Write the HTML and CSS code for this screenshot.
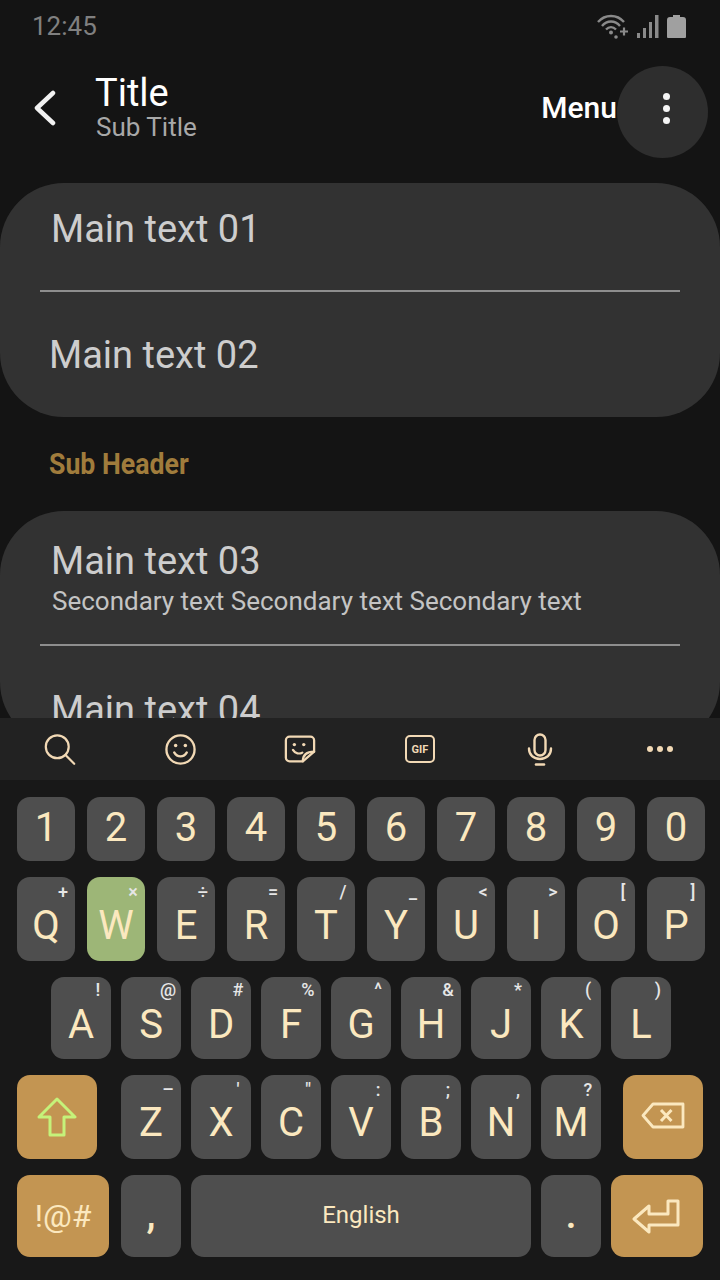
FILE: index.html
```html
<!DOCTYPE html>
<html lang="en">
<head>
    <meta charset="UTF-8">
    <meta name="viewport" content="width=device-width, initial-scale=1.0">
    <title>Settings list</title>
    <link rel="stylesheet" href="styles.css">
</head>
<body>
    <div class="phone">
        <div class="status-bar">
            <span class="clock">12:45</span>
            <div class="status-icons">
                <svg width="32" height="25" viewBox="0 0 32 25" fill="none" stroke="#8a8a8a" stroke-width="2.400">
                    <path d="M1 8C8 0 20 0 27 8"/>
                    <path d="M5 12C10 6 18 6 23 12"/>
                    <path d="M9 15.500C12 12.500 16 12.500 19 15.500"/>
                    <circle cx="14" cy="18.500" r="2" fill="#8a8a8a" stroke="none"/>
                    <circle cx="19" cy="23" r="1.800" fill="#8a8a8a" stroke="none"/>
                    <path d="M23 17.500h8M27 13.500v8" stroke-width="2.200"/>
                </svg>
                <svg width="22" height="23" viewBox="0 0 22 23" fill="#8a8a8a">
                    <rect x="0" y="18" width="3" height="5"/>
                    <rect x="6" y="13" width="3" height="10"/>
                    <rect x="12" y="7" width="3" height="16"/>
                    <rect x="18" y="0" width="3.500" height="23"/>
                </svg>
                <svg width="19" height="23" viewBox="0 0 19 23" fill="#a0a0a0">
                    <path d="M6 0h7v2h3a3 3 0 0 1 3 3v17a1 1 0 0 1-1 1H1a1 1 0 0 1-1-1V5a3 3 0 0 1 3-3h3z"/>
                </svg>
            </div>
        </div>

        <header class="app-bar">
            <svg class="back" width="26" height="36" viewBox="0 0 26 36" fill="none" stroke="#f2f2f2" stroke-width="4.500" stroke-linecap="round" stroke-linejoin="round">
                <path d="M22 3L6 18l16 15"/>
            </svg>
            <div class="titles">
                <div class="title">Title</div>
                <div class="subtitle">Sub Title</div>
            </div>
            <span class="menu-label">Menu</span>
            <div class="more-btn">
                <i></i><i></i><i></i>
            </div>
        </header>

        <main class="content">
            <section class="card card-first">
                <div class="row row-one">Main text 01</div>
                <div class="divider"></div>
                <div class="row row-two">Main text 02</div>
            </section>

            <h3 class="sub-header"><span>Sub Header</span></h3>

            <section class="card">
                <div class="row row-three">
                    Main text 03
                    <div class="secondary">Secondary text Secondary text Secondary text</div>
                </div>
                <div class="divider"></div>
                <div class="row row-four">Main text 04</div>
            </section>
        </main>

        <div class="keyboard">
            <div class="toolbar">
                <svg width="34" height="33" viewBox="0 0 36 36" fill="none" stroke="#f2d9b5" stroke-width="2.400" stroke-linecap="round">
                    <circle cx="15" cy="15" r="12.500"/>
                    <path d="M24 24l9.500 9.500"/>
                </svg>
                <svg width="33" height="33" viewBox="0 0 34 34" fill="none" stroke="#f2d9b5" stroke-width="2.400" stroke-linecap="round">
                    <circle cx="17" cy="17" r="14.500"/>
                    <path d="M10.500 20c3 5.500 10 5.500 13 0"/>
                    <circle cx="12" cy="13" r="1.800" fill="#f2d9b5" stroke="none"/>
                    <circle cx="22" cy="13" r="1.800" fill="#f2d9b5" stroke="none"/>
                </svg>
                <svg width="32" height="30" viewBox="0 0 34 34" preserveAspectRatio="none" fill="none" stroke="#f2d9b5" stroke-width="2.400" stroke-linecap="round" stroke-linejoin="round">
                    <path d="M20 31H6a4 4 0 0 1-4-4V7a4 4 0 0 1 4-4h22a4 4 0 0 1 4 4v13z"/>
                    <path d="M20 31c0-7 4-11 12-11"/>
                    <path d="M9.500 18c2.500 4.500 7 5 10 3"/>
                    <circle cx="11" cy="12" r="1.800" fill="#f2d9b5" stroke="none"/>
                    <circle cx="21" cy="12" r="1.800" fill="#f2d9b5" stroke="none"/>
                </svg>
                <div class="gif-icon">GIF</div>
                <svg width="26" height="35" viewBox="0 0 26 34" fill="none" stroke="#f2d9b5" stroke-width="2.400" stroke-linecap="round">
                    <rect x="7.500" y="2" width="11" height="21" rx="5.500"/>
                    <path d="M2 16c0 6.500 4.500 10.500 11 10.500S24 22.500 24 16"/>
                    <path d="M9 32h8" stroke-width="2.600"/>
                </svg>
                <div class="dots"><i></i><i></i><i></i></div>
            </div>

            <div class="keys">
                <div class="key-row row-digits">
                    <div class="key">1</div><div class="key">2</div><div class="key">3</div><div class="key">4</div><div class="key">5</div>
                    <div class="key">6</div><div class="key">7</div><div class="key">8</div><div class="key">9</div><div class="key">0</div>
                </div>

                <div class="key-row row-q">
                    <div class="key">Q<span class="hint">+</span></div>
                    <div class="key key-active">W<span class="hint">×</span></div>
                    <div class="key">E<span class="hint">÷</span></div>
                    <div class="key">R<span class="hint">=</span></div>
                    <div class="key">T<span class="hint">/</span></div>
                    <div class="key">Y<span class="hint">_</span></div>
                    <div class="key">U<span class="hint">&lt;</span></div>
                    <div class="key">I<span class="hint">&gt;</span></div>
                    <div class="key">O<span class="hint">[</span></div>
                    <div class="key">P<span class="hint">]</span></div>
                </div>

                <div class="key-row row-a">
                    <div class="key">A<span class="hint">!</span></div>
                    <div class="key">S<span class="hint">@</span></div>
                    <div class="key">D<span class="hint">#</span></div>
                    <div class="key">F<span class="hint">%</span></div>
                    <div class="key">G<span class="hint">^</span></div>
                    <div class="key">H<span class="hint">&amp;</span></div>
                    <div class="key">J<span class="hint">*</span></div>
                    <div class="key">K<span class="hint">(</span></div>
                    <div class="key">L<span class="hint">)</span></div>
                </div>

                <div class="key-row row-z">
                    <div class="key key-fn key-shift">
                        <svg width="40" height="40" viewBox="0 0 40 40" fill="none" stroke="#c5f27a" stroke-width="3" stroke-linejoin="round">
                            <path d="M20 2L38 20H27V38H13V20H2z"/>
                        </svg>
                    </div>
                    <div class="key">Z<span class="hint">–</span></div>
                    <div class="key">X<span class="hint">'</span></div>
                    <div class="key">C<span class="hint">"</span></div>
                    <div class="key">V<span class="hint">:</span></div>
                    <div class="key">B<span class="hint">;</span></div>
                    <div class="key">N<span class="hint">,</span></div>
                    <div class="key">M<span class="hint">?</span></div>
                    <div class="key key-fn key-del">
                        <svg width="44" height="27" viewBox="0 0 44 27" fill="none" stroke="#fbe8bf" stroke-width="2.800" stroke-linejoin="round">
                            <path d="M12 2H42V25H12L2 13.500z"/>
                            <path d="M20 8l10.500 11M30.500 8L20 19" stroke-width="3"/>
                        </svg>
                    </div>
                </div>

                <div class="key-row row-bottom">
                    <div class="key key-fn key-sym">!@#</div>
                    <div class="key key-punct">,</div>
                    <div class="key key-space">English</div>
                    <div class="key key-punct">.</div>
                    <div class="key key-fn key-enter">
                        <svg width="48" height="35" viewBox="0 0 48 35" fill="none" stroke="#fbe8bf" stroke-width="3" stroke-linejoin="round">
                            <path d="M36 2H46V26H17V33L2 20 17 7V15H36z"/>
                        </svg>
                    </div>
                </div>
            </div>
        </div>
    </div>
</body>
</html>
```

FILE: styles.css
```css
body {
    margin: 0;
    background-color: #141414;
    font-family: 'Roboto', sans-serif;
}
.phone {
    width: 720px;
    height: 1280px;
    display: flex;
    flex-direction: column;
    overflow: hidden;
}

/* status bar */
.status-bar {
    height: 52px;
    display: flex;
    justify-content: space-between;
    align-items: center;
    padding: 0 34px 0 32px;
    flex-shrink: 0;
}
.clock {
    font-size: 26px;
    color: #808080;
}
.status-icons {
    display: flex;
    align-items: center;
    gap: 8px;
}

/* app bar */
.app-bar {
    height: 131px;
    display: flex;
    align-items: flex-start;
    padding: 14px 12px 0 31px;
    box-sizing: border-box;
    flex-shrink: 0;
}
.back {
    margin-top: 24px;
    flex-shrink: 0;
}
.titles {
    margin-left: 38px;
    margin-top: 8px;
    flex: 1;
}
.title {
    font-size: 38px;
    line-height: 38px;
    color: #ffffff;
}
.subtitle {
    font-size: 26px;
    line-height: 30px;
    color: #a8a8a8;
    margin-left: 1px;
}
.menu-label {
    font-size: 30px;
    font-weight: 500;
    color: #ffffff;
    margin-top: 24px;
}
.more-btn {
    width: 91px;
    height: 92px;
    padding: 0 0 7px 7px;
    box-sizing: border-box;
    border-radius: 50%;
    background-color: #2e2e2e;
    display: flex;
    flex-direction: column;
    justify-content: center;
    align-items: center;
    gap: 5px;
    flex-shrink: 0;
}
.more-btn i {
    width: 7px;
    height: 7px;
    border-radius: 50%;
    background-color: #f5f5f5;
}

/* list */
.content {
    flex: 1;
    min-height: 0;
    overflow: hidden;
}
.card {
    background-color: #323232;
    border-radius: 64px;
}
.row {
    font-size: 38px;
    color: #cdcdcd;
    box-sizing: border-box;
}
.row-one {
    height: 107px;
    padding: 24px 0 0 51px;
}
.row-two {
    height: 125px;
    padding: 41px 0 0 49px;
}
.row-three {
    height: 133px;
    padding: 28px 0 0 51px;
}
.row-four {
    padding: 42px 0 0 51px;
    height: 100px;
}
.secondary {
    font-size: 26px;
    color: #c4c4c4;
    margin: 3px 0 0 1px;
}
.divider {
    height: 2px;
    margin: 0 40px;
    background-color: #8e8e8e;
}
.sub-header {
    margin: 0;
    height: 94px;
    padding-left: 49px;
    box-sizing: border-box;
    font-size: 29px;
    line-height: 94px;
    font-weight: 700;
    color: #a07c3c;
}
.sub-header span {
    display: inline-block;
    transform: scaleX(0.92);
    transform-origin: left center;
}

/* keyboard */
.keyboard {
    height: 562px;
    flex-shrink: 0;
    background-color: #181818;
}
.toolbar {
    height: 62px;
    background-color: #222222;
    display: grid;
    grid-template-columns: repeat(6, 120px);
    justify-items: center;
    align-items: center;
}
.gif-icon {
    width: 26px;
    height: 24px;
    border: 2px solid #f2d9b5;
    border-radius: 5px;
    color: #f2d9b5;
    font-size: 11px;
    font-weight: 700;
    display: flex;
    align-items: center;
    justify-content: center;
}
.dots {
    display: flex;
    gap: 4px;
}
.dots i {
    width: 6px;
    height: 6px;
    border-radius: 50%;
    background-color: #f2d9b5;
}
.keys {
    padding: 17px 17px 0;
    display: flex;
    flex-direction: column;
    gap: 16px;
}
.key-row {
    display: flex;
    gap: 12px;
}
.key {
    position: relative;
    width: 58px;
    background-color: #4e4e4e;
    border-radius: 13px;
    color: #fbe8bf;
    font-size: 40px;
    display: flex;
    align-items: center;
    justify-content: center;
    flex-shrink: 0;
    box-sizing: border-box;
}
.hint {
    position: absolute;
    top: 5px;
    right: 2px;
    width: 20px;
    text-align: center;
    font-size: 18px;
    font-weight: 500;
    line-height: 20px;
    color: #e6e6e6;
}
.row-digits .key {
    height: 64px;
    padding-bottom: 4px;
}
.row-q .key {
    height: 84px;
    padding-top: 12px;
}
.key-active {
    background-color: #9db677;
}
.row-a {
    padding-left: 34px;
    gap: 10px;
}
.row-a .key {
    width: 60px;
    height: 82px;
    padding-top: 13px;
}
.row-a .hint {
    top: 3px;
    right: 3px;
}
.row-z {
    gap: 10px;
}
.row-z .key {
    width: 60px;
    height: 84px;
    padding-top: 10px;
}
.row-z .hint {
    right: 3px;
}
.row-z .key-fn {
    width: 80px;
    padding-top: 0;
}
.key-fn {
    background-color: #c39552;
}
.row-z .key-shift {
    margin-right: 14px;
}
.row-z .key-del {
    margin-left: 12px;
    padding-bottom: 3px;
}
.row-bottom {
    gap: 10px;
}
.row-bottom .key {
    width: 60px;
    height: 82px;
}
.row-bottom .key-punct {
    font-weight: 500;
    padding-bottom: 4px;
}
.row-bottom .key-sym {
    width: 92px;
    margin-right: 2px;
    font-size: 32px;
}
.row-bottom .key-space {
    width: 340px;
    font-size: 24px;
    padding-bottom: 3px;
}
.row-bottom .key-enter {
    width: 92px;
    padding-right: 3px;
}
```
